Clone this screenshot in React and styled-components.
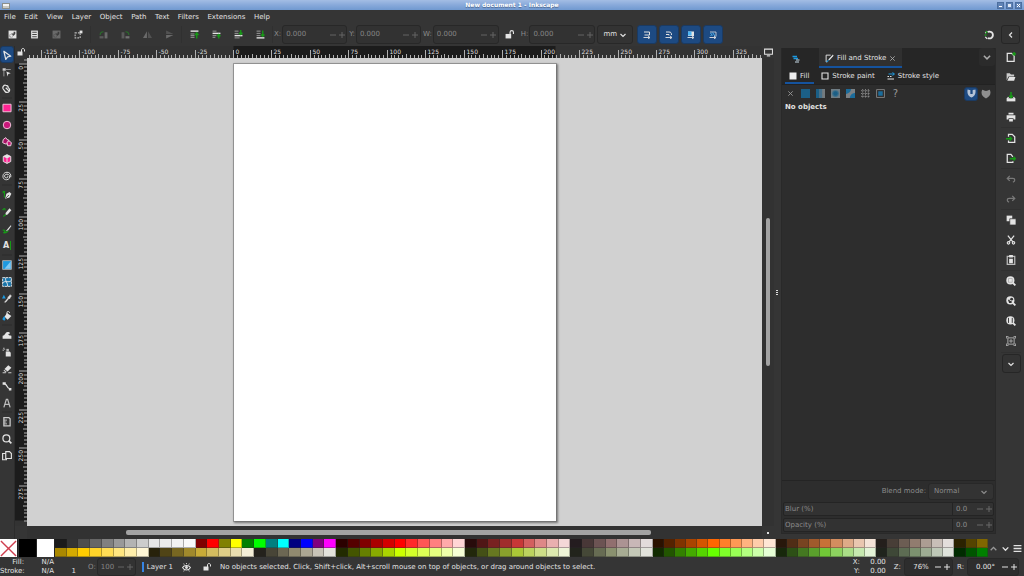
import React from 'react'
import styled, { createGlobalStyle, css } from 'styled-components'

const GlobalStyle = createGlobalStyle`
    * {
        box-sizing: border-box;
    }
    body {
        margin: 0;
        background: #353535;
        color: #e2e2e2;
        font: 7px/9px "DejaVu Sans", Verdana, sans-serif;
        overflow: hidden;
    }
    button, input, select {
        font: inherit;
        color: inherit;
        margin: 0;
        padding: 0;
        border: 0;
        background: none;
        outline: none;
    }
`

const Window = styled.div`
    height: 100vh;
    display: flex;
    flex-direction: column;
`

/* ---------- title, menu ---------- */

const TitleBar = styled.header`
    height: 10px;
    display: grid;
    grid-template-columns: 1fr auto 1fr;
    align-items: center;
    padding: 0 2px;
    background: linear-gradient(#a3bde4, #88a9da 50%, #7099d0);
    h1 {
        margin: 0;
        font-size: 6px;
        line-height: 10px;
        color: #fff;
        text-shadow: 0 1px 1px #4a648c;
    }
`

const WindowButtons = styled.div`
    display: flex;
    gap: 2px;
    justify-content: flex-end;
    button {
        width: 7px;
        height: 7px;
        display: flex;
        background: #5f82b5;
        border: 1px solid #4d6f9f;
    }
    svg {
        width: 5px;
        height: 5px;
    }
`

const AppMark = styled.span`
    width: 8px;
    height: 6px;
    margin-top: 1px;
    background: linear-gradient(#f4f4f4 50%, #c9c9c4 50%);
    border: 1px solid #8b8f8c;
`

const MenuBar = styled.nav`
    height: 13px;
    width: 270px;
    display: flex;
    align-items: center;
    justify-content: space-between;
    padding-left: 4px;
    button {
        line-height: 12px;
    }
`

/* ---------- shared controls ---------- */

const Icon = styled.svg`
    display: block;
    flex: none;
    width: ${p => p.$size || 10}px;
    height: ${p => p.$size || 10}px;
    fill: none;
    stroke: none;
`

const IconButton = styled.button`
    flex: none;
    width: ${p => p.$w || 22}px;
    height: ${p => p.$h || 19}px;
    display: flex;
    align-items: center;
    justify-content: center;
    opacity: ${p => (p.$dim ? 0.45 : 1)};
    border-radius: 3px;
    ${p => p.$on && css`
        background: #1d4a82;
        border: 1px solid #1b3a61;
    `}
    ${p => p.$framed && css`
        background: #333;
        border: 1px solid #262626;
    `}
`

const Separator = styled.span`
    flex: none;
    background: #303030;
    ${p => (p.$across
        ? css`height: 1px; margin: ${p.$space || 0}px 2px;`
        : css`width: 1px; height: 17px; margin: 0 1px;`)}
`

const SpinBox = styled.span`
    display: flex;
    align-items: center;
    width: ${p => p.$w}px;
    height: ${p => p.$h || 19}px;
    padding-left: 3px;
    border: 1px solid #282828;
    border-radius: 3px;
    background: ${p => (p.$live ? '#2d2d2d' : '#323232')};
    color: ${p => (p.$live ? '#e2e2e2' : '#858585')};
    input {
        flex: 1;
        min-width: 0;
        text-align: ${p => (p.$live ? 'center' : 'left')};
    }
    button {
        width: 9px;
        height: 100%;
        display: flex;
        align-items: center;
        justify-content: center;
        opacity: ${p => (p.$live ? 1 : 0.6)};
    }
`

const FieldLabel = styled.label`
    color: ${p => (p.$live ? '#e2e2e2' : '#8c8c8c')};
    margin: 0 ${p => (p.$live ? 3 : 1)}px 0 ${p => p.$gap || 0}px;
`

const L = '#e4e4e4'
const G = '#169a16'
const B = '#1d99e0'
const P = '#ff2493'

const ICONS = {
    minus: <path d="M2 8h12" stroke="currentColor" strokeWidth="2" />,
    plus: <path d="M2 8h12M8 2v12" stroke="currentColor" strokeWidth="2" />,
    down: <path d="M3 6l5 5 5-5" stroke="currentColor" strokeWidth="2.4" />,
    up: <path d="M3 11l5-5 5 5" stroke="currentColor" strokeWidth="2.4" />,
    left: <path d="M10 3L5 8l5 5" stroke="currentColor" strokeWidth="2.4" />,
    close: <path d="M3 3l10 10M13 3L3 13" stroke="currentColor" strokeWidth="2" />,
    menu: <path d="M1 3h14M1 8h14M1 13h14" stroke="currentColor" strokeWidth="2.4" />,
    selectAll: <><path d="M1 1h14v14H1z" fill={L} /><path d="M3 13V8h3V6h4V3h3v4l-3 3H8v3z" fill="#444" /><circle cx="6" cy="10" r="2.5" fill={L} /></>,
    selectLayers: <><path d="M2 1h12v14H2z" fill={L} /><path d="M4 4h8M4 8h8M4 12h8" stroke="#444" strokeWidth="2" /></>,
    deselect: <><path d="M1 1h14v14H1z" fill="#aaa" /><path d="M3 13V8h3V6h4V3h3v4l-3 3H8v3z" fill="#444" /><circle cx="6" cy="10" r="2.5" fill="#aaa" /></>,
    touch: <><path d="M2 5h9v9H2z" stroke="#bbb" strokeWidth="2" strokeDasharray="3 2" /><path d="M10 1h5v5h-5z" fill={L} /></>,
    rotL: <><path d="M10 4h5v11h-5z" fill="#aaa" /><path d="M1 11h7v4H1z" fill="#888" /><path d="M2 9c0-4 2-6 6-6" stroke="#1db31d" strokeWidth="2" /></>,
    rotR: <><path d="M1 4h5v11H1z" fill="#888" /><path d="M8 11h7v4H8z" fill="#bbb" /><path d="M14 9c0-4-2-6-6-6" stroke="#1db31d" strokeWidth="2" /></>,
    flipH: <><path d="M7 2v12H0z" fill="#aaa" /><path d="M9 2v12h7z" fill="#777" /></>,
    flipV: <><path d="M2 1l13 6H2z" fill="#777" /><path d="M2 15l13-6H2z" fill="#aaa" /></>,
    raiseTop: <><path d="M1 2h14" stroke={L} strokeWidth="2.5" /><path d="M1 7h7M1 10h7M1 13h7" stroke="#aaa" strokeWidth="1.5" /><path d="M12 15V5M9 9l3-4 3 4" stroke={G} strokeWidth="2.4" /></>,
    raise: <><path d="M1 6h14" stroke={L} strokeWidth="2.5" /><path d="M1 2h7M1 10h7M1 13h5" stroke="#aaa" strokeWidth="1.5" /><path d="M12 15V8M9 11l3-3 3 3" stroke={G} strokeWidth="2.4" /></>,
    lower: <><path d="M1 10h14" stroke={L} strokeWidth="2.5" /><path d="M1 2h7M1 6h7M1 14h9" stroke="#aaa" strokeWidth="1.5" /><path d="M12 0v8M9 5l3 3 3-3" stroke={G} strokeWidth="2.4" /></>,
    lowerBottom: <><path d="M1 14h14" stroke={L} strokeWidth="2.5" /><path d="M1 2h7M1 6h7M1 10h7" stroke="#aaa" strokeWidth="1.5" /><path d="M12 1v10M9 8l3 3 3-3" stroke={G} strokeWidth="2.4" /></>,
    unlock: <><path d="M1 7h10v8H1z" fill={L} /><path d="M9 8V4c0-4 6-4 6 0v3" stroke={L} strokeWidth="2" /></>,
    scaleStroke: <><path d="M2 2h11v6H3" stroke={L} strokeWidth="2" /><path d="M1 13h12M10 10l4 3-4 3" stroke={L} strokeWidth="1.8" /></>,
    scaleCorner: <><path d="M2 2h6c4 0 5 2 5 6M2 7h6v2" stroke={L} strokeWidth="2" /><path d="M1 13h12M10 10l4 3-4 3" stroke={L} strokeWidth="1.8" /></>,
    moveGradient: <><path d="M2 1h12v9H2z" fill={L} /><path d="M2 1h7v8H2z" fill="#4bb5f5" /><path d="M1 13h12M10 10l4 3-4 3" stroke={L} strokeWidth="1.8" /></>,
    movePattern: <><path d="M2 2h12v9" stroke={L} strokeWidth="1.5" /><path d="M3 4l4 5M7 3l5 7M3 8l2 2" stroke="#4bb5f5" strokeWidth="2" /><path d="M1 13h12M10 10l4 3-4 3" stroke={L} strokeWidth="1.8" /></>,
    snap: <><path d="M6 3c11-3 11 13 0 10" stroke={L} strokeWidth="3" /><path d="M5 2L2 5M5 14l-3-3" stroke={L} strokeWidth="2" /><path d="M1 8h3M3 2l2 3" stroke={G} strokeWidth="2.4" /></>,
    select: <path d="M3 2l11 8-5 1-3 4z" stroke={L} strokeWidth="2" strokeLinejoin="round" />,
    node: <><path d="M1 2h5v4H1z" fill="#ccc" /><path d="M6 4h8M3 6v9" stroke="#999" strokeWidth="1.5" /><path d="M7 7l7 3-4 1-1 4z" fill={L} /></>,
    booleans: <path d="M6 2a4 4 0 0 1 4 4 4 4 0 1 1-5 6l-3-4a4 4 0 0 1 4-6zM6 6l5 5" stroke={L} strokeWidth="2" />,
    rect: <path d="M1.500 2h13v12h-13z" fill={P} stroke="#f3c6dd" strokeWidth="1.5" />,
    circle: <circle cx="8" cy="8" r="6" fill="#c9177a" stroke="#f3c6dd" strokeWidth="1.5" />,
    star: <><path d="M6 1l2 3 3 1-2 3v3H5L1 9l1-5z" fill="#a81468" stroke="#f3d6e4" strokeWidth="1.5" /><path d="M11 6l4 3-1 5H9l-1-5z" fill="#c9177a" stroke="#f3d6e4" strokeWidth="1.5" /></>,
    box3d: <><path d="M8 1l6 3v8l-6 3-6-3V4z" fill={P} stroke={L} strokeWidth="1.5" /><path d="M2 4l6-3 6 3-6 3z" fill={L} /><path d="M8 7v8" stroke={L} strokeWidth="1.5" /></>,
    spiral: <path d="M8 8c2 0 2 3-1 3-4 0-4-6 1-6 6 0 6 9-1 9C-1 14 0 2 8 2c4 0 7 3 6 8" stroke="#ddd" strokeWidth="1.6" />,
    pen: <><path d="M5 14l2-8 5-3 3 3-3 6z" fill={L} /><path d="M6 13l5-5" stroke="#444" strokeWidth="1.5" /><path d="M1 2c5 0 2 6 3 10M1 5l4-3" stroke={G} strokeWidth="1.7" /></>,
    pencil: <><path d="M6 9l6-7 3 3-6 7-4 1z" fill={L} /><path d="M1 5c2-3 4-3 4 0M2 15l4-3" stroke={G} strokeWidth="2" /></>,
    calligraphy: <><path d="M14 2L8 9l-2 3 4-2 5-7z" fill={L} /><path d="M1 10c4-1 5 1 2 4 3 1 5-1 7-3" stroke={G} strokeWidth="2" /></>,
    gradient: <><path d="M1 1h14v14H1z" fill={B} stroke="#aaa" strokeWidth="1.5" /><path d="M14 2v12H4z" fill="#7fc9f3" /></>,
    mesh: <><path d="M1 1h14v14H1z" fill="#1673a8" stroke={L} strokeWidth="1.5" strokeDasharray="4 1" /><path d="M6 1c-2 5 4 9 3 14M1 9c5-4 9 1 14-3" stroke={L} strokeWidth="1.5" /></>,
    dropper: <><path d="M5 12l5-6-1-1 2-1 2-3 2 2-2 3-1 2-1-1-5 6H4z" fill={L} stroke={L} strokeWidth="0.8" /><path d="M3 1l3 6H0z" fill={B} /></>,
    bucket: <><path d="M8 3l7 5-6 6-5-5z" fill={L} /><path d="M8 8V2c0-2 4-2 4 1" stroke={L} strokeWidth="1.5" /><path d="M4 8c3 7 0 8-1 7-4-1-2-4 1-7z" fill={B} /></>,
    tweak: <path d="M1 14V9c4 0 4-6 8-6 4 0 5 3 2 3-2 1 0 3 4 3v5z" fill={L} />,
    spray: <><path d="M6 7h6l2 2v6H6z" fill={L} /><path d="M7 3h4v4H7z" fill="#bbb" /><path d="M2 2h2M1 5h2M4 4h1" stroke={L} strokeWidth="1.5" /></>,
    eraser: <><path d="M10 2l5 4-6 6-5-4z" fill={L} /><path d="M3 10l4 3M1 14h5M10 14h5" stroke="#ccc" strokeWidth="1.8" /></>,
    connector: <><path d="M1 2h5v4H1zM11 11h4v4h-4z" fill={L} /><path d="M4 5c5 0 3 6 8 7" stroke={L} strokeWidth="2" /></>,
    lpe: <path d="M3 15L7 2h2l4 13M5 10h6" stroke="#bdbdbd" strokeWidth="2" />,
    measure: <><path d="M3 1h8l2 2v11H3z" stroke="#ccc" strokeWidth="2" /><path d="M3 5h5M3 8h4M3 11h5" stroke="#ccc" strokeWidth="1.5" /></>,
    zoom: <><circle cx="7" cy="7" r="5.5" stroke={L} strokeWidth="2" /><path d="M11 11l4 4" stroke={L} strokeWidth="2.5" /></>,
    pages: <><path d="M1 4h6v10H1z" stroke={L} strokeWidth="1.8" /><path d="M6 1h6l3 3v8H6z" fill="#353535" stroke={L} strokeWidth="1.8" /></>,
    monitor: <><path d="M1 2h14v9H1z" stroke={L} strokeWidth="1.8" /><path d="M5 13h6v2H5z" fill={L} /></>,
    newDoc: <><path d="M2 2h7l4 4v9H2z" stroke={L} strokeWidth="2" /><path d="M13 0v6M10 3h6" stroke={G} strokeWidth="2.4" /></>,
    open: <><path d="M1 2h5l2 2h5v3H4l-3 6z" fill="#ccc" /><path d="M5 8h10l-2 6H2z" fill={L} /></>,
    save: <><path d="M1 10h14v5H1z" fill={L} /><path d="M4 8L2 11M12 8l2 3" stroke={L} strokeWidth="2" /><path d="M8 0v9M5 6l3 3 3-3" stroke={G} strokeWidth="2.4" /></>,
    print: <path d="M4 1h8v3H4zM1 5h14v7h-3v-2H4v2H1zM5 11h6v4H5z" fill={L} />,
    importDoc: <><path d="M4 6V2h6l4 4v9H4v-3" stroke={L} strokeWidth="2" /><path d="M0 9h8M6 6l3 3-3 3" stroke={G} strokeWidth="2.4" /></>,
    exportDoc: <><path d="M11 6L8 2H2v13h9v-2" stroke={L} strokeWidth="2" /><path d="M6 9h8M12 6l3 3-3 3" stroke={G} strokeWidth="2.4" /></>,
    undo: <path d="M6 3L2 7l4 4M2 7h9c4 0 4 5 0 6" stroke="#ccc" strokeWidth="2" />,
    redo: <path d="M10 3l4 4-4 4M14 7H5c-4 0-4 5 0 6" stroke="#ccc" strokeWidth="2" />,
    copy: <><path d="M1 1h9v9H1z" fill={L} /><path d="M6 6h10v10H6z" fill={L} stroke="#353535" strokeWidth="1.2" /></>,
    cut: <><path d="M3 1l8 10M13 1L5 11" stroke={L} strokeWidth="2" /><circle cx="4" cy="12.5" r="2" stroke={L} strokeWidth="1.8" /><circle cx="12" cy="12.5" r="2" stroke={L} strokeWidth="1.8" /></>,
    paste: <><path d="M2 2h12v13H2z" stroke="#bbb" strokeWidth="2" /><path d="M5 0h6v4H5zM5 6h6v7H5z" fill={L} /></>,
    zoomSel: <><circle cx="7" cy="7" r="6.5" fill={L} /><path d="M4 4h6v6H4z" stroke="#999" /><path d="M11 11l4 4" stroke={L} strokeWidth="3" /></>,
    zoomDraw: <><circle cx="7" cy="7" r="6.5" fill={L} /><circle cx="9" cy="5" r="2.3" fill="#353535" /><path d="M3 6h3v2h3v3H5z" fill="#353535" /><path d="M11 11l4 4" stroke={L} strokeWidth="3" /></>,
    zoomPage: <><circle cx="7" cy="7" r="6.5" fill={L} /><path d="M4 3v8M10 3v8" stroke="#353535" strokeWidth="1.5" /><path d="M11 11l4 4" stroke={L} strokeWidth="3" /></>,
    zoomCenter: <><path d="M3 3h10v10H3z" stroke="#aaa" strokeWidth="1.6" /><path d="M8 5v6M5 8h6M0 1h4M12 1h4M0 15h4M12 15h4M1 0v4M15 0v4M1 12v4M15 12v4" stroke="#aaa" strokeWidth="1.5" /></>,
    layers: <><path d="M1 3h9M3 7h9" stroke={B} strokeWidth="3" /><path d="M8 10h7M6 14h8" stroke="#c7dbe8" strokeWidth="2" /></>,
    fillStroke: <><path d="M10 2H2v12h2M14 3l-7 7" stroke={L} strokeWidth="1.7" /><path d="M14 1l1 2-7 8-2-1z" fill="#ddd" /><path d="M7 10c-1 4-3 5-6 4 2 0 3-4 6-4z" fill={B} /></>,
    fill: <path d="M1 1h14v14H1z" fill="#ededed" />,
    strokePaint: <path d="M2 2h12v12H2z" stroke={L} strokeWidth="2.2" />,
    strokeStyle: <><path d="M3 4h11M11 1l4 3-4 3" stroke={B} strokeWidth="2" /><path d="M1 9h3M6 9h3M1 14h13" stroke={L} strokeWidth="2.4" /></>,
    flat: <path d="M0 0h16v16H0z" fill="#1b5f86" />,
    linear: <><path d="M0 0h16v16H0z" fill="#747b7f" /><path d="M0 0h6v16H0z" fill="#1b5f86" /><path d="M6 0h5v16H6z" fill="#46708a" /></>,
    radial: <><path d="M0 0h16v16H0z" fill="#6f7d85" /><circle cx="8" cy="8" r="6" fill="#3c708c" /><circle cx="8" cy="8" r="4" fill="#1b5f86" /></>,
    meshPaint: <><path d="M0 0h16v16H0z" fill="#7b8185" /><path d="M0 0h9c0 4-4 8-9 9zM16 7v9H7c0-5 4-9 9-9z" fill="#1b6c9b" /></>,
    pattern: <path d="M0 3h16M0 8h16M0 13h16M3 0v16M8 0v16M13 0v16" stroke="#999" strokeWidth="1.4" strokeDasharray="2 1" />,
    swatch: <><path d="M1 1h14v14H1z" stroke="#8b8b8b" strokeWidth="1.5" /><path d="M4 4h8v8H4z" fill="#1b6c9b" /></>,
    evenOdd: <><path d="M1 1c3 1 4 1 5 1v4c-2 4 6 4 4 0V2c1 0 2 0 5-1 1 7-1 12-7 14C2 13 0 8 1 1z" fill="#b5c3d6" /></>,
    nonZero: <path d="M2 1c2 0 4 2 6 2s4-2 6-2c3 6 0 12-6 14C2 13-1 7 2 1z" fill="#8e8e8e" />,
    eye: <><path d="M1 8c3-5 11-5 14 0-3 6-11 6-14 0z" stroke={L} strokeWidth="1.8" /><circle cx="8" cy="8" r="2.5" fill={L} /><path d="M4 3L3 1M8 2V0M12 3l1-2M4 13l-1 2M12 13l1 2" stroke={L} strokeWidth="1.5" /></>,
}

const Glyph = ({ name, size }) => (
    <Icon viewBox="0 0 16 16" $size={size} aria-hidden="true">{ICONS[name]}</Icon>
)

const Spin = ({ id, label, value, w, h, live, gap }) => (
    <>
        <FieldLabel htmlFor={id} $live={live} $gap={gap}>{label}</FieldLabel>
        <SpinBox $w={w} $h={h} $live={live}>
            <input id={id} defaultValue={value} disabled={!live} />
            <button aria-label="decrease"><Glyph name="minus" size={8} /></button>
            <button aria-label="increase"><Glyph name="plus" size={8} /></button>
        </SpinBox>
    </>
)

/* ---------- tool controls bar ---------- */

const ControlsBar = styled.div`
    height: 23px;
    display: flex;
    align-items: center;
    padding: 0 4px 0 1px;
`

const Spacer = styled.span`
    flex: 1;
`

const SelectBox = styled.span`
    position: relative;
    display: flex;
    align-items: center;
    width: ${p => p.$w}px;
    height: ${p => p.$h || 19}px;
    margin-left: 2px;
    border: 1px solid #282828;
    border-radius: 3px;
    background: #333;
    color: ${p => (p.$muted ? '#8c8c8c' : '#e2e2e2')};
    select {
        appearance: none;
        width: 100%;
        height: 100%;
        padding-left: 5px;
        line-height: 9px;
    }
    option {
        background: #333;
    }
    svg {
        position: absolute;
        right: 5px;
        pointer-events: none;
    }
`

const ToggleGroup = styled.div`
    display: flex;
    gap: 2px;
    margin-left: 4px;
`

const CONTROL_GROUPS = [
    ['selectAll', 'selectLayers', '-deselect', 'touch'],
    ['-rotL', '-rotR', '-flipH', '-flipV'],
    ['raiseTop', 'raise', 'lower', 'lowerBottom'],
]

const Controls = () => (
    <ControlsBar>
        {CONTROL_GROUPS.map((group, i) => (
            <React.Fragment key={i}>
                {group.map(item => {
                    const name = item.replace('-', '')
                    return (
                        <IconButton key={name} $dim={item !== name} aria-label={name}>
                            <Glyph name={name} size={9} />
                        </IconButton>
                    )
                })}
                <Separator />
            </React.Fragment>
        ))}
        <Spin id="x" label="X:" value="0.000" w={65} />
        <Spin id="y" label="Y:" value="0.000" w={65} gap={2} />
        <Spin id="w" label="W:" value="0.000" w={66} gap={2} />
        <IconButton aria-label="lock ratio"><Glyph name="unlock" size={9} /></IconButton>
        <Spin id="h" label="H:" value="0.000" w={66} />
        <SelectBox $w={36}>
            <select aria-label="unit" defaultValue="mm">
                <option>mm</option>
                <option>px</option>
            </select>
            <Glyph name="down" size={8} />
        </SelectBox>
        <ToggleGroup>
            {['scaleStroke', 'scaleCorner', 'moveGradient', 'movePattern'].map(name => (
                <IconButton key={name} $w={20} $on aria-label={name}><Glyph name={name} size={8} /></IconButton>
            ))}
        </ToggleGroup>
        <Spacer />
        <IconButton $w={24} aria-label="snapping"><Glyph name="snap" size={10} /></IconButton>
        <IconButton $w={19} $framed aria-label="collapse"><Glyph name="left" size={8} /></IconButton>
    </ControlsBar>
)

/* ---------- tool box ---------- */

const Body = styled.div`
    flex: 1;
    min-height: 0;
    display: flex;
`

const ToolColumn = styled.div`
    flex: none;
    width: 15px;
    display: flex;
    flex-direction: column;
    border-right: 1px solid #2c2c2c;
`

const TextToolFace = styled.span`
    font-weight: bold;
    font-size: 8px;
    line-height: 9px;
    padding-right: 1px;
    border-right: 1px solid #169a16;
`

const TOOL_GROUPS = [
    ['select', 'node', 'booleans'],
    ['rect', 'circle', 'star', 'box3d', 'spiral'],
    ['pen', 'pencil', 'calligraphy', 'text'],
    ['gradient', 'mesh', 'dropper', 'bucket'],
    ['tweak', 'spray', 'eraser', 'connector', 'lpe'],
    ['measure', 'zoom', 'pages'],
]

const Tools = () => (
    <ToolColumn>
        {TOOL_GROUPS.map((group, i) => (
            <React.Fragment key={i}>
                {i > 0 && <><Separator $across /><Separator $across /></>}
                {group.map(name => (
                    <IconButton key={name} $w={14} $h={17} $on={name === 'select'} aria-label={name}>
                        {name === 'text' ? <TextToolFace>A</TextToolFace> : <Glyph name={name} size={10} />}
                    </IconButton>
                ))}
            </React.Fragment>
        ))}
    </ToolColumn>
)

/* ---------- canvas with rulers ---------- */

const PAGE_W = 322
const PAGE_H = 457
const PX_PER_MM = 1.538

const CanvasGrid = styled.div`
    flex: 1;
    min-width: 0;
    display: grid;
    grid-template-columns: 12px 1fr 12px;
    grid-template-rows: 12px 1fr 13px;
`

const Corner = styled.button`
    display: flex;
    align-items: center;
    justify-content: center;
`

const RulerSvg = styled.svg`
    display: block;
    width: 100%;
    height: 100%;
    overflow: hidden;
    background: #333;
    text {
        font-size: 6px;
        fill: #dcdcdc;
    }
`

const Canvas = styled.main`
    display: grid;
    place-items: center;
    padding: 1px 0 0 1px;
    background: #d1d1d1;
    box-shadow: 0 1px #777;
    overflow: hidden;
`

const Page = styled.div`
    width: ${PAGE_W}px;
    height: ${PAGE_H}px;
    background: #fff;
    box-shadow: 0 0 0 1px rgba(110, 110, 110, 0.5), 1px 1px 2px 1px #777;
`

const Track = styled.div`
    display: flex;
    background: #323232;
    padding: ${p => (p.$vertical ? '160px 4px' : '4px 111px 4px 99px')};
    &::before {
        content: '';
        flex: 1;
        border-radius: 2px;
        background: #a3a3a3;
    }
`

const Dot = styled.span`
    width: 2px;
    height: 2px;
    background: #ddd;
`

const range = (from, to) => Array.from({ length: to - from + 1 }, (_, i) => from + i)

const Ruler = ({ vertical, from, to }) => {
    const length = vertical ? PAGE_H : PAGE_W
    const origin = -length / 2
    return (
        <RulerSvg>
            <svg x={vertical ? 0 : '50%'} y={vertical ? '50%' : 0} overflow="visible">
                <rect
                    x={vertical ? 0 : origin}
                    y={vertical ? origin : 0}
                    width={vertical ? 12 : length}
                    height={vertical ? length : 12}
                    fill="#1c1c1c"
                />
                {range(from * 10 - 9, to * 10 + 9).map(i => {
                    const at = Math.round(origin + i * 2.5 * PX_PER_MM)
                    const size = i % 10 === 0 ? 8 : i % 5 === 0 ? 4 : 3
                    const d = vertical ? `M${12 - size} ${at}h${size}` : `M${at} ${12 - size}v${size}`
                    return <path key={i} d={d} stroke="#b0b0b0" />
                })}
                {range(from, to).map(i => {
                    const at = Math.round(origin + i * 25 * PX_PER_MM)
                    return vertical
                        ? <text key={i} transform={`translate(8 ${at + 2}) rotate(-90)`} textAnchor="end">{i * 25}</text>
                        : <text key={i} x={at + 2} y="8">{i * 25}</text>
                })}
            </svg>
        </RulerSvg>
    )
}

const Workspace = () => (
    <CanvasGrid>
        <Corner aria-label="lock guides"><Glyph name="unlock" size={8} /></Corner>
        <Ruler from={-5} to={13} />
        <Corner aria-label="display mode"><Glyph name="monitor" size={9} /></Corner>
        <Ruler vertical from={0} to={11} />
        <Canvas><Page /></Canvas>
        <Track $vertical />
        <span />
        <Track />
        <Corner aria-label="color managed view"><Dot /></Corner>
    </CanvasGrid>
)

/* ---------- dock ---------- */

const Grip = styled.div`
    flex: none;
    width: 7px;
    display: flex;
    flex-direction: column;
    justify-content: center;
    align-items: center;
    gap: 1px;
    padding-right: 1px;
    ${Dot} {
        height: 1px;
    }
`

const Dock = styled.aside`
    flex: none;
    width: 215px;
    margin: 2px 0 5px;
    display: flex;
    flex-direction: column;
    background: #2d2d2d;
    border: 1px solid #292929;
    border-top: 0;
`

const DockTabs = styled.div`
    height: 20px;
    display: flex;
    background: #262626;
    > button:last-child {
        color: #aaa;
        background: #2b2b2b;
    }
`

const DockTab = styled.button`
    width: ${p => p.$w}px;
    display: flex;
    align-items: center;
    justify-content: ${p => (p.$active ? 'flex-start' : 'center')};
    gap: 3px;
    padding: ${p => (p.$active ? '2px 0 0 6px' : '2px 9px 0 0')};
    ${p => p.$active && css`
        background: #303030;
        border-bottom: 2px solid #15539e;
    `}
    svg:last-child:not(:first-child) {
        color: #aaa;
    }
`

const SubTabs = styled.div`
    height: 17px;
    display: flex;
    align-items: stretch;
    padding-left: 3px;
    gap: 3px;
    background: #262626;
    border-bottom: 1px solid #222;
    button {
        display: flex;
        align-items: center;
        gap: 3px;
        padding: 2px 5px 0 4px;
        border-bottom: 2px solid transparent;
    }
    button:first-child {
        border-color: #15539e;
    }
`

const PaintRow = styled.div`
    height: 17px;
    display: flex;
    align-items: center;
    padding: 0 1px;
    color: #999;
    font-size: 10px;
`

const Message = styled.p`
    flex: 1;
    margin: 0;
    padding: 1px 3px;
    font-weight: bold;
    border-bottom: 1px solid #242424;
`

const DockFooter = styled.div`
    padding: 2px 1px 1px;
    display: flex;
    flex-direction: column;
    gap: 2px;
    color: #8c8c8c;
`

const BlendRow = styled.div`
    display: flex;
    align-items: center;
    justify-content: flex-end;
`

const SliderRow = styled.div`
    height: 14px;
    display: flex;
    align-items: center;
    border: 1px solid #242424;
    border-radius: 2px;
    background: #323232;
    label {
        flex: 1;
        align-self: stretch;
        line-height: 12px;
        padding-left: 1px;
        border-right: 1px solid #242424;
    }
    input {
        width: 22px;
        padding-left: 3px;
    }
    button {
        width: 9px;
        display: flex;
        justify-content: center;
        opacity: 0.6;
    }
`

const Slider = ({ id, label }) => (
    <SliderRow>
        <label htmlFor={id}>{label}</label>
        <input id={id} defaultValue="0.0" disabled />
        <button aria-label="decrease"><Glyph name="minus" size={8} /></button>
        <button aria-label="increase"><Glyph name="plus" size={8} /></button>
    </SliderRow>
)

const FillStrokeDock = () => (
    <Dock>
        <DockTabs>
            <DockTab $w={37} aria-label="layers"><Glyph name="layers" size={8} /></DockTab>
            <DockTab $w={83} $active>
                <Glyph name="fillStroke" size={9} />Fill and Stroke<Glyph name="close" size={7} />
            </DockTab>
            <Spacer />
            <IconButton $w={16} $h={18} aria-label="dialogs"><Glyph name="down" size={10} /></IconButton>
        </DockTabs>
        <SubTabs>
            <button><Glyph name="fill" size={8} />Fill</button>
            <button><Glyph name="strokePaint" size={8} />Stroke paint</button>
            <button><Glyph name="strokeStyle" size={8} />Stroke style</button>
        </SubTabs>
        <PaintRow>
            <IconButton $w={15} $h={15} aria-label="no paint"><Glyph name="close" size={7} /></IconButton>
            {['flat', 'linear', 'radial', 'meshPaint', 'pattern', 'swatch'].map(name => (
                <IconButton key={name} $w={15} $h={15} aria-label={name}><Glyph name={name} size={9} /></IconButton>
            ))}
            <IconButton $w={15} $h={15}>?</IconButton>
            <Spacer />
            <IconButton $w={14} $h={14} $on aria-label="even odd"><Glyph name="evenOdd" size={9} /></IconButton>
            <IconButton $w={16} $h={14} aria-label="non zero"><Glyph name="nonZero" size={10} /></IconButton>
        </PaintRow>
        <Message>No objects</Message>
        <DockFooter>
            <BlendRow>
                <label htmlFor="blend">Blend mode:</label>
                <SelectBox $w={66} $h={17} $muted>
                    <select id="blend" defaultValue="Normal">
                        <option>Normal</option>
                        <option>Multiply</option>
                    </select>
                    <Glyph name="down" size={8} />
                </SelectBox>
            </BlendRow>
            <Slider id="blur" label="Blur (%)" />
            <Slider id="opacity" label="Opacity (%)" />
        </DockFooter>
    </Dock>
)

/* ---------- command bar ---------- */

const CommandColumn = styled.div`
    flex: none;
    width: 28px;
    display: flex;
    flex-direction: column;
    align-items: center;
    padding: 1px 0 0 2px;
    > span {
        width: 20px;
    }
`

const COMMAND_GROUPS = [
    ['newDoc', 'open', 'save', 'print'],
    ['importDoc', 'exportDoc'],
    ['-undo', '-redo'],
    ['copy', 'cut', 'paste'],
    ['zoomSel', 'zoomDraw', 'zoomPage', 'zoomCenter'],
]

const Commands = () => (
    <CommandColumn>
        {COMMAND_GROUPS.map((group, i) => (
            <React.Fragment key={i}>
                {i > 0 && <Separator $across />}
                {group.map(item => {
                    const name = item.replace('-', '')
                    return (
                        <IconButton key={name} $w={20} $h={20} $dim={item !== name} aria-label={name}>
                            <Glyph name={name} size={10} />
                        </IconButton>
                    )
                })}
            </React.Fragment>
        ))}
        <Separator $across $space={1} />
        <IconButton $w={19} $framed aria-label="more"><Glyph name="down" size={8} /></IconButton>
    </CommandColumn>
)

/* ---------- palette ---------- */

const TOP = `
1a1a1a 333333 4d4d4d 666666 808080 999999 b3b3b3 cccccc e6e6e6 ececec f2f2f2 f9f9f9
800000 ff0000 808000 ffff00 008000 00ff00 008080 00ffff 000080 0000ff 800080 ff00ff
2b0000 550000 800000 aa0000 d40000 ff0000 ff2a2a ff5555 ff8080 ffaaaa ffd5d5
280b0b 501616 782121 a02c2c c83737 d35f5f de8787 e9afaf f4d7d7
241c1f 483737 6c5353 916f6f ac9393 c8b7b7 e3dbdb
2b1100 552200 803300 aa4400 d45500 ff6600 ff7f2a ff9955 ffb380 ffccaa ffe6d5
28170b 502d16 784421 a05a2c c87137 d38d5f deaa87 e9c6af f4e3d7
241f1c 483e37 6c5d53 917c6f ac9d93 c8beb7 e3dedb
2b2200 554400 806600`

const BOTTOM = `
aa8800 d4aa00 ffcc00 ffd42a ffdd55 ffe680 ffeeaa fff6d5
28220b 504416 786721 a0892c c8ab37 d3bc5f decd87 e9ddaf f4eed7
24221c 484537 6c6753 918a6f aca793 c8c4b7 e3e2db
222b00 445500 668000 88aa00 aad400 ccff00 d4ff2a ddff55 e5ff80 eeffaa f6ffd5
22280b 445016 677821 89a02c abc837 bcd35f cdde87 dde9af eef4d7
22241c 454837 676c53 8a916f a7ac93 c4c8b7 e2e3db
112b00 225500 338000 44aa00 55d400 66ff00 7fff2a 99ff55 b3ff80 ccffaa e5ffd5
17280b 2d5016 447821 5aa02c 71c837 8dd35f aade87 c6e9af e3f4d7
1f241c 3e4837 5d6c53 7c916f 9dac93 bec8b7 dee3db
002b00 005500 008000`

const COLORS = `${TOP} ${BOTTOM}`.trim().split(/\s+/)

const PaletteBar = styled.div`
    height: 18px;
    display: flex;
    padding-right: 1px;
`

const Pinned = styled.button`
    flex: none;
    width: 18px;
    margin-right: ${p => (p.$color ? 0 : 1)}px;
    background: ${p => p.$color || '#fff'};
    border-right: 1px solid #222;
`

const Swatches = styled.div`
    flex: 1;
    display: grid;
    grid-template-columns: repeat(51, minmax(0, 22fr)) repeat(30, minmax(0, 21fr));
    grid-template-rows: 1fr 1fr;
`

const Swatch = styled.button`
    background: ${p => p.$color};
    box-shadow: inset -1px -1px rgba(40, 40, 40, 0.35);
`

const PaletteNav = styled.div`
    flex: none;
    width: 35px;
    display: flex;
    align-items: center;
    justify-content: space-between;
    button:first-child {
        color: #999;
    }
`

const Palette = () => (
    <PaletteBar>
        <Pinned aria-label="none">
            <Icon viewBox="0 0 18 18" $size={17}>
                <path d="M1 1l16 16M17 1L1 17" stroke="#cf3f4f" strokeWidth="1.5" />
            </Icon>
        </Pinned>
        <Pinned $color="#000" aria-label="black" />
        <Pinned $color="#fff" aria-label="white" />
        <Swatches>
            {COLORS.map((c, i) => <Swatch key={i} $color={`#${c}`} aria-label={c} />)}
        </Swatches>
        <PaletteNav>
            <IconButton $w={11} $h={18} aria-label="previous"><Glyph name="up" size={9} /></IconButton>
            <IconButton $w={11} $h={18} aria-label="next"><Glyph name="down" size={9} /></IconButton>
            <IconButton $w={11} $h={18} aria-label="palette menu"><Glyph name="menu" size={9} /></IconButton>
        </PaletteNav>
    </PaletteBar>
)

/* ---------- status bar ---------- */

const StatusBar = styled.footer`
    height: 19px;
    display: flex;
    align-items: center;
    padding: 1px 5px 0 0;
`

const Pairs = styled.dl`
    display: grid;
    grid-template-columns: ${p => p.$cols};
    margin: 0;
    text-align: right;
    dd {
        margin: 0;
    }
`

const LayerButton = styled.button`
    display: flex;
    align-items: center;
    height: 10px;
    margin: 0 4px 0 6px;
    padding-left: 3px;
    border-left: 2px solid #3584e4;
`

const Hint = styled.p`
    flex: 1;
    margin: 0 0 0 3px;
    white-space: nowrap;
    overflow: hidden;
`

const Status = () => (
    <StatusBar>
        <Pairs $cols="24px 30px 22px">
            <dt>Fill:</dt><dd>N/A</dd><dd />
            <dt>Stroke:</dt><dd>N/A</dd><dd>1</dd>
        </Pairs>
        <Spin id="o" label="O:" value="100" w={39} h={18} gap={12} />
        <LayerButton>Layer 1</LayerButton>
        <IconButton $w={20} $h={18} aria-label="visibility"><Glyph name="eye" size={9} /></IconButton>
        <IconButton $w={20} $h={18} aria-label="lock layer"><Glyph name="unlock" size={8} /></IconButton>
        <Hint>No objects selected. Click, Shift+click, Alt+scroll mouse on top of objects, or drag around objects to select.</Hint>
        <Pairs $cols="9px 26px">
            <dt>X:</dt><dd>0.00</dd>
            <dt>Y:</dt><dd>0.00</dd>
        </Pairs>
        <Spin id="z" label="Z:" value="76%" w={49} h={18} gap={8} live />
        <Spin id="r" label="R:" value="0.00°" w={52} h={18} gap={4} live />
    </StatusBar>
)

const App = () => (
    <>
        <GlobalStyle />
        <Window>
            <TitleBar>
                <AppMark />
                <h1>New document 1 - Inkscape</h1>
                <WindowButtons>
                    <button aria-label="minimize"><svg viewBox="0 0 5 5"><path d="M1 3h3v1H1z" fill="#fff" /></svg></button>
                    <button aria-label="maximize"><svg viewBox="0 0 5 5"><path d="M1 1h3v3H1z" fill="#dfe8f5" /></svg></button>
                    <button aria-label="close"><svg viewBox="0 0 5 5"><path d="M1 1l3 3M4 1L1 4" stroke="#fff" /></svg></button>
                </WindowButtons>
            </TitleBar>
            <MenuBar>
                {['File', 'Edit', 'View', 'Layer', 'Object', 'Path', 'Text', 'Filters', 'Extensions', 'Help'].map(m => (
                    <button key={m}>{m}</button>
                ))}
            </MenuBar>
            <Controls />
            <Body>
                <Tools />
                <Workspace />
                <Grip><Dot /><Dot /><Dot /></Grip>
                <FillStrokeDock />
                <Commands />
            </Body>
            <Palette />
            <Status />
        </Window>
    </>
)

export default App
